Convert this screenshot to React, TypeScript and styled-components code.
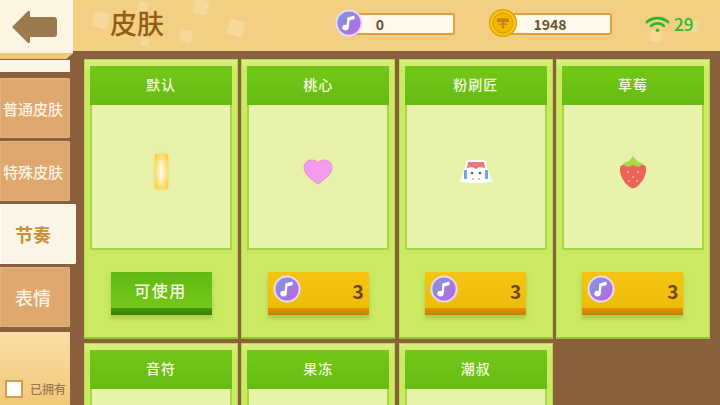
import styled, { createGlobalStyle } from 'styled-components';

const FONT = '"Noto Sans CJK SC", "Noto Sans", sans-serif';

const Global = createGlobalStyle`
  html, body { margin: 0; padding: 0; background: #8a5f3c; }
  * { box-sizing: border-box; }
`;

const NoteIcon = ({ size }: { size: number }) => (
  <NoteCircle $size={size}>
    <svg width={size} height={size} viewBox="0 0 28 28">
      <defs>
        <linearGradient id="noteFill" x1="0" y1="0" x2="1" y2="1">
          <stop offset="0" stopColor="#7f9adc" />
          <stop offset="1" stopColor="#bb62e2" />
        </linearGradient>
      </defs>
      <circle cx="14" cy="14" r="12.6" fill="url(#noteFill)" stroke="#e8daf5" strokeWidth="2" />
      <path d="M12.4 8.4 L19.4 6.6 L19.8 10 L14.4 11.4 L13.8 18.6 A3.3 2.8 0 1 1 11.6 16 Z" fill="#fff" />
    </svg>
  </NoteCircle>
);

const CoinIcon = () => (
  <svg width="28" height="28" viewBox="0 0 28 28">
    <circle cx="14" cy="14" r="13.4" fill="#f7c800" stroke="#e09a0c" strokeWidth="1.2" />
    <circle cx="14" cy="14" r="10" fill="#f2b600" stroke="#d99508" strokeWidth="1" />
    <path d="M8 9.6 H20 V13 H15.2 V19.4 H12.8 V13 H8 Z" fill="#c4801c" />
    <rect x="9.5" y="14.6" width="9" height="1.2" fill="#c4801c" />
  </svg>
);

const WifiIcon = () => (
  <svg width="25" height="18" viewBox="0 0 26 18" fill="none" stroke="#27b82e" strokeWidth="2.8" strokeLinecap="round">
    <path d="M2 7 C8 1.6 18 1.6 24 7" />
    <path d="M6.4 10.8 C10 7.6 16 7.6 19.6 10.8" />
    <circle cx="13" cy="15.4" r="1.8" fill="#27b82e" stroke="none" />
  </svg>
);

const BackArrow = () => (
  <svg width="46" height="34" viewBox="0 0 46 34">
    <path d="M1 17 L17 1 Q19 0 19 3 V7 H43 Q46 7 46 10 V24 Q46 27 43 27 H19 V31 Q19 34 17 33 Z" fill="#9c7a50" />
  </svg>
);

const Heart = () => (
  <svg width="30" height="26" viewBox="0 0 30 26">
    <path d="M15 25 C10 21.500 1 16 1 8.500 C1 3.500 5 1 8.500 1 C11.500 1 14 2.200 15 3.600 C16 2.200 18.500 1 21.500 1 C25 1 29 3.500 29 8.500 C29 16 20 21.500 15 25 Z" fill="#f59bee" stroke="#e887d8" strokeWidth="0.8" />
  </svg>
);

const Brush = () => (
  <svg width="34" height="25" viewBox="0 0 34 25">
    <path d="M8 1 H26 L33 23 Q17 25 1 23 Z" fill="#fff" />
    <path d="M9 3 H25 L26 9 L20 8 L17 10 L13 8 L8 9 Z" fill="#e87a78" />
    <rect x="5" y="11" width="3" height="9" rx="1" fill="#6aa6e0" />
    <rect x="26" y="11" width="3" height="9" rx="1" fill="#6aa6e0" />
    <circle cx="13" cy="14" r="1.3" fill="#55606a" />
    <circle cx="21" cy="14" r="1.3" fill="#55606a" />
    <circle cx="14" cy="20" r="1" fill="#b5b5b5" />
    <circle cx="20" cy="20" r="1" fill="#b5b5b5" />
  </svg>
);

const Strawberry = () => (
  <svg width="28" height="34" viewBox="0 0 28 34">
    <path d="M1.500 11 C6 7.500 22 7.500 26.500 11 C29.500 19 21 32 14 33.500 C7 32 -1.500 19 1.500 11 Z" fill="#ee625c" />
    <path d="M14 1 L18 6 L25 9 L19 12 L14 10 L9 12 L3 9 L10 6 Z" fill="#a6d84a" />
    <circle cx="9" cy="17" r=".9" fill="#f9b5a5" />
    <circle cx="19" cy="17" r=".9" fill="#f9b5a5" />
    <circle cx="14" cy="22" r=".9" fill="#f9b5a5" />
    <circle cx="10" cy="26" r=".9" fill="#f9b5a5" />
    <circle cx="18" cy="26" r=".9" fill="#f9b5a5" />
  </svg>
);

const Stage = styled.div`
  position: relative;
  width: 720px;
  height: 405px;
  overflow: hidden;
  display: flex;
  flex-direction: column;
  font-family: ${FONT};
  background: #8a5f3c;
`;

const Header = styled.header`
  height: 55px;
  flex: none;
  display: flex;
  align-items: center;
  padding-left: 110px;
  background: #f3cf84;
  border-bottom: 4px solid #8a5f3c;
`;

const Confetti = styled.i<{ $x: number; $y: number; $s: number }>`
  position: absolute;
  left: ${(p) => p.$x}px;
  top: ${(p) => p.$y}px;
  width: ${(p) => p.$s}px;
  height: ${(p) => p.$s}px;
  background: #f8dfa8;
  opacity: 0.6;
  transform: rotate(15deg);
`;

const BackButton = styled.button`
  position: absolute;
  left: 0;
  top: 0;
  width: 73px;
  height: 59px;
  padding: 0 6px 0 0;
  border: 0;
  border-bottom: 6px solid #f0c777;
  background: #fdf5e3;
  display: flex;
  align-items: center;
  justify-content: center;
  clip-path: polygon(0 0, 100% 0, 100% 90%, 90% 100%, 0 100%);
`;

const Title = styled.h1`
  position: relative;
  margin: 0 0 5px;
  width: 239px;
  font-size: 27px;
  font-weight: 500;
  line-height: 46px;
  color: #925c14;
`;

const Counter = styled.div<{ $w: number; $right: number }>`
  position: relative;
  width: ${(p) => p.$w}px;
  height: 22px;
  margin-top: -3px;
  display: flex;
  align-items: center;
  justify-content: center;
  padding-right: ${(p) => p.$right}px;
  background: #fef9ea;
  border: 2px solid #e0a040;
  border-radius: 3px;
  font-size: 14px;
  font-weight: 700;
  color: #6b5233;
`;

const CounterIcon = styled.span`
  position: absolute;
  left: -16px;
  top: -6px;
  display: flex;
`;

const NoteCircle = styled.span<{ $size: number }>`
  display: flex;
  width: ${(p) => p.$size}px;
  height: ${(p) => p.$size}px;
  flex: none;
`;

const Spacer = styled.div<{ $w: number }>`
  width: ${(p) => p.$w}px;
  flex: none;
`;

const Signal = styled.div`
  position: relative;
  display: flex;
  align-items: center;
  gap: 4px;
  margin-left: 33px;
  margin-top: -4px;
  font-size: 17px;
  font-weight: 500;
  color: #27b82e;
`;

const Body = styled.main`
  flex: 1;
  min-height: 0;
  display: flex;
`;

const Sidebar = styled.nav`
  width: 83px;
  flex: none;
  padding-top: 5px;
  display: flex;
  flex-direction: column;
  align-items: flex-start;
`;

const TabStub = styled.div`
  width: 70px;
  height: 12px;
  margin-bottom: 6px;
  background: #fdf6e8;
`;

const Tab = styled.div<{ $active?: boolean; $size: number }>`
  width: ${(p) => (p.$active ? 76 : 70)}px;
  height: 60px;
  margin-bottom: 3px;
  padding-right: ${(p) => (p.$active ? 10 : 4)}px;
  display: flex;
  align-items: center;
  justify-content: center;
  font-size: ${(p) => p.$size}px;
  font-weight: ${(p) => (p.$active ? 700 : 500)};
  white-space: nowrap;
  border-radius: 0 2px 2px 0;
  background: ${(p) => (p.$active ? '#fbf5e8' : '#dda76e')};
  color: ${(p) => (p.$active ? '#c98f36' : '#fdf3e0')};
  box-shadow: inset 0 0 0 1px ${(p) => (p.$active ? '#fffdf6' : '#e3b27e')};
`;

const Filter = styled.div`
  width: 70px;
  height: 73px;
  margin-top: 2px;
  padding: 0 0 7px 5px;
  display: flex;
  align-items: flex-end;
  gap: 7px;
  background: linear-gradient(180deg, #f9dfa8, #f0c878);
`;

const Check = styled.span`
  width: 18px;
  height: 18px;
  flex: none;
  background: #fff;
  border: 2px solid #d0a050;
`;

const FilterLabel = styled.span`
  font-size: 12px;
  font-weight: 500;
  line-height: 18px;
  white-space: nowrap;
  color: #9c7a50;
`;

const Grid = styled.section`
  display: grid;
  grid-template-columns: repeat(4, 154px);
  grid-auto-rows: 280px;
  column-gap: 3.33px;
  row-gap: 4px;
  padding: 4px 0 0 1px;
`;

const Card = styled.article`
  height: 280px;
  padding: 6px 5px 0;
  display: flex;
  flex-direction: column;
  align-items: center;
  background: #cbe962;
  border: 1px solid #b5da4c;
  border-bottom: 2px solid #8fc52f;
  background-image: linear-gradient(180deg, #dbee85 0, #cbe962 12px);
`;

const CardHead = styled.div`
  width: 100%;
  height: 39px;
  flex: none;
  padding-bottom: 3px;
  display: flex;
  align-items: center;
  justify-content: center;
  font-size: 14px;
  font-weight: 500;
  letter-spacing: 1px;
  color: #f5fadf;
  background: linear-gradient(180deg, #72c818, #67ba12);
`;

const Preview = styled.div`
  width: 100%;
  height: 145px;
  flex: none;
  display: flex;
  align-items: center;
  justify-content: center;
  padding-bottom: 10px;
  background: #e8f2ab;
  border: 2px solid #a4d746;
  border-top: 0;
`;

const Glow = styled.div`
  width: 13px;
  height: 35px;
  border-radius: 2px;
  background: radial-gradient(ellipse at center, #fff6dc 15%, #fde48a 55%, #fbc80f 100%);
  box-shadow: 0 0 3px #f7d050;
`;

const Buy = styled.button<{ $free?: boolean }>`
  position: relative;
  width: 101px;
  height: 43px;
  margin-top: 22px;
  padding: 0 5px 7px ${(p) => (p.$free ? 4 : 0)}px;
  border: 0;
  display: flex;
  align-items: center;
  justify-content: ${(p) => (p.$free ? 'center' : 'flex-end')};
  font-family: ${FONT};
  font-weight: ${(p) => (p.$free ? 500 : 700)};
  font-size: ${(p) => (p.$free ? 16 : 19)}px;
  letter-spacing: ${(p) => (p.$free ? 1.5 : 0)}px;
  color: ${(p) => (p.$free ? '#f2fbd8' : '#6e4606')};
  background: ${(p) =>
    p.$free
      ? 'linear-gradient(180deg, #62b812 0, #74c81a calc(100% - 7px), #4a9a08 calc(100% - 7px), #357c04 100%)'
      : 'linear-gradient(180deg, #f5c410 0, #f0bc0c calc(100% - 7px), #e29408 calc(100% - 7px), #c87c04 100%)'};
  box-shadow: 0 4px 4px rgba(150, 180, 60, 0.55);
`;

const BuyIcon = styled.span`
  position: absolute;
  left: 5px;
  top: 3px;
  display: flex;
`;

type Item = { name: string; art?: React.ReactNode; free?: boolean };

const items: Item[] = [
  { name: '默认', art: <Glow />, free: true },
  { name: '桃心', art: <Heart /> },
  { name: '粉刷匠', art: <Brush /> },
  { name: '草莓', art: <Strawberry /> },
  { name: '音符' },
  { name: '果冻' },
  { name: '潮叔' },
];

const bits = [
  [93, 12, 16], [138, 2, 10], [141, 38, 8], [180, 30, 12], [194, 0, 14], [228, 20, 16], [650, 30, 12], [686, 20, 12],
];

export default function App() {
  return (
    <Stage>
      <Global />
      <Header>
        {bits.map(([x, y, s]) => (
          <Confetti key={x} $x={x} $y={y} $s={s} />
        ))}
        <Title>皮肤</Title>
        <Counter $w={106} $right={44}>
          <CounterIcon>
            <NoteIcon size={28} />
          </CounterIcon>
          0
        </Counter>
        <Spacer $w={48} />
        <Counter $w={109} $right={15}>
          <CounterIcon>
            <CoinIcon />
          </CounterIcon>
          1948
        </Counter>
        <Signal>
          <WifiIcon />
          29
        </Signal>
      </Header>
      <BackButton aria-label="back">
        <BackArrow />
      </BackButton>
      <Body>
        <Sidebar>
          <TabStub />
          <Tab $size={15}>普通皮肤</Tab>
          <Tab $size={15}>特殊皮肤</Tab>
          <Tab $size={18} $active>节奏</Tab>
          <Tab $size={18}>表情</Tab>
          <Filter>
            <Check />
            <FilterLabel>已拥有</FilterLabel>
          </Filter>
        </Sidebar>
        <Grid>
          {items.map((item) => (
            <Card key={item.name}>
              <CardHead>{item.name}</CardHead>
              <Preview>{item.art}</Preview>
              {item.free && <Buy $free>可使用</Buy>}
              {item.art && !item.free && (
                <Buy>
                  <BuyIcon>
                    <NoteIcon size={28} />
                  </BuyIcon>
                  3
                </Buy>
              )}
            </Card>
          ))}
        </Grid>
      </Body>
    </Stage>
  );
}
